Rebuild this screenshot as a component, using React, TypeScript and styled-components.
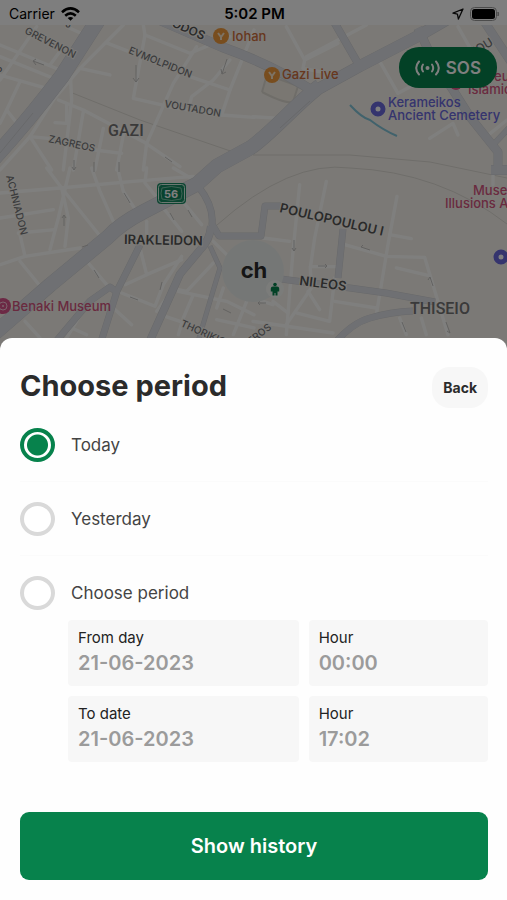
import React, { useState } from "react";
import styled, { createGlobalStyle } from "styled-components";

const GlobalStyle = createGlobalStyle`
  *, *::before, *::after { box-sizing: border-box; }
  html, body { margin: 0; background: #fefefe; }
  body, button, input {
    font-family: Inter, "Open Sans", "Liberation Sans", sans-serif;
  }
`;

const green = "#07824c";

const Screen = styled.main`
  display: flex;
  flex-direction: column;
  min-height: 100vh;
  background: #7b7974;
`;

const Stage = styled.section`
  position: relative;
  flex: 1 0 auto;
  min-height: 240px;
  margin-bottom: -12px;
  overflow: hidden;
`;

const MapCanvas = styled.svg`
  position: absolute;
  inset: 0;
  width: 100%;
  height: 100%;
`;

const Scrim = styled.div`
  position: absolute;
  inset: 0;
  background: rgba(0, 0, 0, 0.5);
`;

const StatusBar = styled.header`
  position: relative;
  display: grid;
  grid-template-columns: 1fr auto 1fr;
  align-items: center;
  height: 25px;
  padding: 3px 7px 0 9px;
  background: #fdfdfd;
  color: #000;
  font-size: 14px;
  line-height: 20px;
`;

const StatusGroup = styled.div<{ $end?: boolean }>`
  display: flex;
  align-items: center;
  justify-content: ${(p) => (p.$end ? "flex-end" : "flex-start")};
  gap: 6px;
`;

const Clock = styled.time`
  font-size: 15px;
  font-weight: 600;
`;

const MapActions = styled.div`
  position: relative;
  display: flex;
  justify-content: flex-end;
  padding: 22px 10px 0;
`;

const SosButton = styled.button`
  display: flex;
  align-items: center;
  justify-content: center;
  gap: 6px;
  height: 41px;
  padding: 0 16px;
  border: 0;
  border-radius: 20px;
  background: ${green};
  color: #fff;
  font-size: 17px;
  font-weight: 600;
  cursor: pointer;
`;

const Sheet = styled.form`
  position: relative;
  padding: 29px 19px 20px 20px;
  border-radius: 12px 12px 0 0;
  background: #fefefe;
`;

const SheetHeader = styled.div`
  display: flex;
  align-items: flex-start;
  justify-content: space-between;
`;

const Title = styled.h1`
  margin: 0;
  color: #2b2b2b;
  font-size: 29px;
  font-weight: 700;
  line-height: 38px;
`;

const BackButton = styled.button`
  height: 41px;
  padding: 0 11px;
  border: 0;
  border-radius: 18px;
  background: #f7f7f7;
  color: #2b2b2b;
  font-size: 14px;
  font-weight: 700;
  cursor: pointer;
`;

const Options = styled.fieldset`
  margin: 0;
  padding: 0;
  border: 0;
`;

const Option = styled.label<{ $last?: boolean }>`
  display: flex;
  align-items: center;
  gap: 16px;
  padding: 20px 0 ${(p) => (p.$last ? 10 : 20)}px;
  box-shadow: ${(p) => (p.$last ? "none" : "inset 0 -1px #fbfbfb")};
  color: #444;
  font-size: 17px;
  line-height: 24px;
  cursor: pointer;
`;

const Radio = styled.input`
  appearance: none;
  flex: none;
  width: 35px;
  height: 34px;
  margin: 0;
  border: 4px solid #d9d9d9;
  border-radius: 50%;
  background: #fff;
  cursor: pointer;

  &:checked {
    border-color: ${green};
    background: radial-gradient(circle, ${green} 0 10px, #fff 11px);
  }
`;

const Fields = styled.div`
  display: grid;
  grid-template-columns: 9fr 7fr;
  gap: 10px;
  margin-left: 48px;
`;

const Field = styled.label`
  display: flex;
  flex-direction: column;
  min-width: 0;
  height: 66px;
  padding: 8px 10px;
  border-radius: 4px;
  background: #f7f7f7;
  color: #222;
  font-size: 15px;
  line-height: 20px;
`;

const FieldInput = styled.input`
  width: 100%;
  height: 30px;
  padding: 0;
  border: 0;
  outline: 0;
  background: transparent;
  color: #9b9b9b;
  font-size: 20px;
  font-weight: 600;
`;

const SubmitButton = styled.button`
  display: block;
  width: 100%;
  height: 68px;
  margin-top: 50px;
  border: 0;
  border-radius: 9px;
  background: ${green};
  color: #fff;
  font-size: 20px;
  font-weight: 600;
  cursor: pointer;
`;

const RoadEdge = styled.g`
  fill: none;
  stroke: #d0d1d5;
  stroke-linejoin: round;
`;

const RoadFill = styled.g`
  fill: none;
  stroke: #dfe1e6;
  stroke-linejoin: round;
`;

const Lanes = styled.g`
  fill: none;
  stroke: #fffffd;
  stroke-width: 10;
  stroke-linecap: round;
  stroke-linejoin: round;
`;

const Arrows = styled.g`
  fill: none;
  stroke: #c6c5c3;
  stroke-width: 1;
`;

const StreetLabel = styled.text<{ $size?: number; $dark?: boolean }>`
  font-family: Inter, sans-serif;
  font-size: ${(p) => p.$size ?? 10}px;
  font-weight: ${(p) => (p.$dark ? 600 : 500)};
  fill: ${(p) => (p.$dark ? "#555" : "#77777a")};
  stroke: #f9f6f0;
  stroke-width: 2px;
  paint-order: stroke;
`;

const DistrictLabel = styled.text`
  font-family: Roboto, sans-serif;
  font-size: 16px;
  font-weight: 500;
  fill: #747474;
`;

const PlaceLabel = styled.text<{ $color: string }>`
  font-family: Inter, sans-serif;
  font-size: 13px;
  font-weight: 500;
  fill: ${(p) => p.$color};
`;

const majorRoads: [number, string][] = [
  [16, "M98 20 L62 76 C40 105 20 130 -8 160"],
  [10, "M155 18 L222 47 Q275 66 316 93"],
  [12, "M446 20 L420 35 L360 66 L320 88"],
  [15, "M320 86 C300 100 270 135 250 148 L217 166 L197 184 L143 212 Q120 224 108 237 L50 285 L-5 333"],
  [8, "M333 20 L360 67"],
  [9, "M418 28 L433 60 L453 90 L470 117 L498 152 V174"],
  [9, "M482 18 L511 62"],
  [6, "M511 126 L493 145"],
  [7, "M198 186 Q214 206 212 224 L219 236 H261 L265 206 H281"],
  [8, "M211 226 Q210 240 200 250 L180 274 L148 345"],
  [5, "M210 246 L220 268 L213 291 L197 345"],
  [7, "M140 245 L117 291 L100 345"],
  [7, "M118 293 L110 287 L90 301 L53 345"],
  [7, "M281 279 L350 288 L386 293 L435 302"],
  [7, "M343 229 L338 278"],
  [7, "M335 343 Q352 323 370 318 Q390 312 413 311"],
  [10, "M491 170 H511"],
];

const laneTiles: { at: string; d: string[] }[] = [
  {
    at: "translate(0 0) scale(0.3333)",
    d: [
      "M0 135 L60 160 L180 210", "M0 170 L160 235", "M0 225 L140 265", "M110 80 L0 240",
      "M60 245 L20 330 L55 375", "M0 370 L20 330", "M190 140 L150 195", "M200 80 L255 105",
      "M370 75 L240 205 L160 300 L90 410 L0 510", "M240 205 L330 225", "M318 128 L395 158",
      "M430 75 L435 105 L400 295 L485 315", "M435 105 L570 160 L690 110",
      "M590 140 L520 250 L440 430 L430 510", "M570 230 L690 270 L762 90",
      "M690 180 L640 240 L575 290 L570 310", "M690 270 L665 345 L762 352", "M500 320 L665 345",
      "M175 300 L250 330 L430 425 L540 500", "M210 200 L215 300 L190 510", "M250 335 L220 510",
      "M165 368 L200 370 V310", "M90 410 L155 510", "M90 410 L145 415",
      "M310 385 L285 510", "M370 405 L350 510", "M285 450 L365 460",
    ],
  },
  {
    at: "translate(253 0) scale(0.3333)",
    d: [
      "M100 80 L155 180 L255 130", "M155 180 L150 205 L200 215", "M160 170 L340 75",
      "M375 175 L435 280 L510 240", "M0 350 L80 355", "M530 415 L600 370 L615 405",
      "M615 80 L700 230", "M650 170 L700 145", "M700 410 L762 360", "M580 350 L620 330",
    ],
  },
  {
    at: "translate(0 168) scale(0.3333)",
    d: [
      "M0 75 L180 60 L400 40 L580 25", "M140 0 L185 60 L305 210", "M210 0 L175 150 L150 245",
      "M185 60 L205 150 L195 235", "M0 150 L160 125", "M55 195 L165 185", "M60 200 L75 265 L0 290",
      "M75 265 L240 240", "M60 280 L125 360", "M275 0 L300 70 L340 160", "M355 10 L370 70 L410 130",
      "M440 0 L435 45 L480 100", "M490 120 L545 190", "M540 90 L605 170", "M520 0 L580 35",
      "M440 160 V200", "M265 285 L320 350", "M420 240 L440 320 L375 350", "M440 320 L545 275",
      "M545 265 L490 350 L465 415 L365 375", "M560 290 L500 390 L470 430", "M640 285 L560 370 L535 365",
      "M535 370 L680 400 L762 440", "M580 380 L550 450 L535 500", "M480 440 L540 460",
      "M340 420 L395 470", "M75 460 L120 510", "M245 435 L200 510", "M215 480 L260 500",
      "M640 220 L680 260", "M650 455 L762 480", "M740 400 L700 500", "M670 360 L650 420",
    ],
  },
  {
    at: "translate(253 168) scale(0.3333)",
    d: [
      "M140 50 L120 250 L100 500", "M220 40 L185 210 L172 300 L175 360 L100 470",
      "M432 85 L405 230 L370 440", "M30 210 L110 220", "M275 230 L400 265 L515 268 L585 500",
      "M410 200 L475 212", "M430 300 L525 322", "M172 296 H250", "M245 330 L230 460 L130 435",
      "M165 370 L200 425", "M245 400 L370 420", "M0 460 L240 495", "M60 400 L105 435",
      "M440 450 L460 500", "M505 450 L520 500", "M0 390 L60 410", "M720 10 V50",
    ],
  },
];

const arrows = [
  "M44 65 L33 61 l3 -2 M33 61 l3 4", "M136 65 V82 l-3 -4 M136 82 l3 -4",
  "M227 59 L222 74 l-1 -5 M222 74 l4 -2", "M74 160 V170 l-2 -3 M74 170 l2 -3",
  "M94 162 V172 M119 162 V172", "M64 215 V226 M64 215 l-2 3 M64 215 l2 3",
  "M124 193 L130 203 M170 213 l4 7 M188 210 l4 7", "M94 270 l5 8 M160 290 l2 -8 M130 297 l8 3",
  "M294 240 V251 l-2 -3 M294 251 l2 -3", "M318 266 h9 l-2 -2 M327 266 l-2 2",
  "M370 250 l-9 -3 l2 -2", "M433 286 l-3 -9 l-2 3", "M402 322 l4 10 M446 322 l4 11 l-3 -2",
  "M266 303 h-8 l2 -2 M258 303 l2 2", "M223 309 l8 4", "M165 157 l7 5 M88 245 l-6 2",
];

function CityMap() {
  return (
    <MapCanvas viewBox="0 0 507 350" preserveAspectRatio="xMidYMid slice" role="img" aria-label="Map of Gazi and Thiseio">
      <rect width="507" height="350" fill="#f7f3ec" />
      <path d="M262 92 l4 -14 h10 l22 8 l-5 16 q-8 2 -31 -10" fill="#f4efe4" stroke="#dfdbd2" strokeWidth="2" />
      <path
        d="M70 92 L140 120 L245 156 M217 225 Q290 160 350 168 Q440 172 507 224 M253 155 H350 L430 162 L507 178"
        fill="none" stroke="#dedbd5" strokeWidth="1"
      />
      {laneTiles.map((tile) => (
        <Lanes key={tile.at} transform={tile.at}>
          {tile.d.map((d) => <path key={d} d={d} />)}
        </Lanes>
      ))}
      <RoadEdge>
        {majorRoads.map(([w, d]) => <path key={d} d={d} strokeWidth={w} />)}
      </RoadEdge>
      <RoadFill>
        {majorRoads.map(([w, d]) => <path key={d} d={d} strokeWidth={w - 1} />)}
      </RoadFill>
      <path d="M0 153 L33 113 M280 128 L310 101" stroke="#cfd0d4" fill="none" />
      <Arrows>{arrows.map((d) => <path key={d} d={d} />)}</Arrows>
      <path d="M350 105 Q362 118 370 120 Q383 130 397 136" fill="none" stroke="#82c4d8" strokeWidth="2" />

      <StreetLabel transform="translate(24 33) rotate(27)">GREVENON</StreetLabel>
      <StreetLabel transform="translate(128 53) rotate(22)">EVMOLPIDON</StreetLabel>
      <StreetLabel transform="translate(164 107) rotate(10)">VOUTADON</StreetLabel>
      <StreetLabel transform="translate(48 142) rotate(12)">ZAGREOS</StreetLabel>
      <StreetLabel transform="translate(6 176) rotate(76)">ACHNIADON</StreetLabel>
      <StreetLabel transform="translate(-4 75)">P</StreetLabel>
      <StreetLabel transform="translate(65 27) rotate(10)">J</StreetLabel>
      <StreetLabel $size={12} $dark transform="translate(171 26) rotate(24)">ODOS</StreetLabel>
      <StreetLabel $dark $size={13} transform="translate(124 244) rotate(1)">IRAKLEIDON</StreetLabel>
      <StreetLabel $dark $size={13} transform="translate(279 212) rotate(13)">POULOPOULOU I</StreetLabel>
      <StreetLabel $dark $size={13} transform="translate(299 285) rotate(7)">NILEOS</StreetLabel>
      <StreetLabel transform="translate(180 326) rotate(24)">THORIKION</StreetLabel>
      <StreetLabel transform="translate(251 345) rotate(-38)">EROS</StreetLabel>
      <StreetLabel $size={12} transform="translate(472 58) rotate(-32)">KOU</StreetLabel>
      <DistrictLabel x="108" y="136">GAZI</DistrictLabel>
      <DistrictLabel x="410" y="314">THISEIO</DistrictLabel>

      <g>
        <circle cx="221" cy="36" r="8" fill="#f09a3c" />
        <path d="M218 33 L221 37 L224 33 M221 37 V40" fill="none" stroke="#fbe6c8" strokeWidth="2" />
        <PlaceLabel $color="#cf6f3c" x="232" y="41">Iohan</PlaceLabel>
        <circle cx="272" cy="75" r="8" fill="#f09a3c" />
        <path d="M269 72 L272 76 L275 72 M272 76 V79" fill="none" stroke="#fbe6c8" strokeWidth="2" />
        <PlaceLabel $color="#cf6f3c" x="282" y="79">Gazi Live</PlaceLabel>
      </g>
      <g>
        <circle cx="378" cy="109" r="5" fill="#fff" stroke="#6a68dc" strokeWidth="5" />
        <PlaceLabel $color="#6a68dc" x="388" y="107">Kerameikos</PlaceLabel>
        <PlaceLabel $color="#6a68dc" x="388" y="120">Ancient Cemetery</PlaceLabel>
        <circle cx="501" cy="257" r="5" fill="#fff" stroke="#6a68dc" strokeWidth="5" />
      </g>
      <g>
        <circle cx="456" cy="84" r="6" fill="#e05a88" />
        <PlaceLabel $color="#d4557f" x="494" y="81">eum</PlaceLabel>
        <PlaceLabel $color="#d4557f" x="468" y="94">Islamic Art</PlaceLabel>
        <PlaceLabel $color="#d4557f" x="473" y="195">Museum</PlaceLabel>
        <PlaceLabel $color="#d4557f" x="445" y="208">Illusions Athens</PlaceLabel>
        <circle cx="3" cy="306" r="8" fill="#d9528a" />
        <circle cx="3" cy="306" r="4" fill="none" stroke="#f7c6da" />
        <circle cx="3" cy="306" r="1" fill="#f7c6da" />
        <PlaceLabel $color="#d4557f" x="12" y="311">Benaki Museum</PlaceLabel>
      </g>
      <g>
        <rect x="157" y="183" width="29" height="21" rx="4" fill="#188a63" />
        <rect x="158.500" y="184.500" width="26" height="18" rx="3" fill="none" stroke="#d8f0e4" />
        <path d="M162 188 q9 -3 19 0 q2 6 0 11 q-9 3 -19 0 q-2 -6 0 -11z" fill="#12855d" stroke="#7fc4a8" strokeWidth="1" />
        <text x="171" y="198" textAnchor="middle" fontFamily="Inter, sans-serif" fontSize="11" fontWeight="700" fill="#fff">56</text>
      </g>
      <g>
        <circle cx="253" cy="271" r="31" fill="#ebefed" />
        <text x="254" y="278" textAnchor="middle" fontFamily="Inter, sans-serif" fontSize="22" fontWeight="700" fill="#2a2a2a">ch</text>
        <circle cx="275" cy="289" r="9" fill="#f7f8f5" />
        <circle cx="275" cy="284.500" r="1.800" fill={green} />
        <path d="M273 286.500 h4 q2.200 0 2.200 2 v3 h-1.700 v4 h-2 v-2.500 h-1 v2.500 h-2 v-4 h-1.700 v-3 q0 -2 2.200 -2z" fill={green} />
      </g>
    </MapCanvas>
  );
}

function WifiIcon() {
  return (
    <svg width="19" height="14" viewBox="0 0 19 14" fill="none" stroke="#000" strokeWidth="2.6" aria-label="Wi-Fi">
      <path d="M1 5.2 Q9.500 -2.400 18 5.200" />
      <path d="M4.200 8.700 Q9.500 4 14.800 8.700" />
      <path d="M9.500 13.800 L6.700 11 Q9.500 8.800 12.300 11 Z" fill="#000" stroke="none" />
    </svg>
  );
}

function LocationIcon() {
  return (
    <svg width="12" height="12" viewBox="0 0 12 12" fill="none" stroke="#111" strokeWidth="1.3" strokeLinejoin="round" aria-label="Location">
      <path d="M11 1 L1 5.200 L5.400 6.200 L6.400 11 Z" />
    </svg>
  );
}

function BatteryIcon() {
  return (
    <svg width="30" height="14" viewBox="0 0 30 14" aria-label="Battery full">
      <rect x="0.5" y="0.5" width="26" height="13" rx="4" fill="none" stroke="#999" />
      <rect x="2" y="2" width="23" height="10" rx="2.5" fill="#000" />
      <path d="M28 5 q1.500 2 0 4z" fill="#999" stroke="#999" />
    </svg>
  );
}

function BroadcastIcon() {
  return (
    <svg width="25" height="16" viewBox="0 0 25 16" fill="none" stroke="#fff" strokeWidth="2" strokeLinecap="round" aria-hidden="true">
      <circle cx="12.5" cy="8" r="2" fill="#fff" stroke="none" />
      <path d="M8 4.500 Q5.600 8 8 11.500 M17 4.500 Q19.400 8 17 11.500" />
      <path d="M4 1.500 Q-1.600 8 4 14.500 M21 1.500 Q26.600 8 21 14.500" />
    </svg>
  );
}

const periods = ["Today", "Yesterday", "Choose period"];

const rangeFields = [
  { name: "fromDay", label: "From day", value: "21-06-2023" },
  { name: "fromHour", label: "Hour", value: "00:00" },
  { name: "toDate", label: "To date", value: "21-06-2023" },
  { name: "toHour", label: "Hour", value: "17:02" },
];

export default function App() {
  const [period, setPeriod] = useState("Today");

  return (
    <>
      <GlobalStyle />
      <Screen>
        <Stage>
          <CityMap />
          <StatusBar>
            <StatusGroup>
              Carrier
              <WifiIcon />
            </StatusGroup>
            <Clock>5:02 PM</Clock>
            <StatusGroup $end>
              <LocationIcon />
              <BatteryIcon />
            </StatusGroup>
          </StatusBar>
          <MapActions>
            <SosButton type="button">
              <BroadcastIcon />
              SOS
            </SosButton>
          </MapActions>
          <Scrim />
        </Stage>
        <Sheet onSubmit={(e) => e.preventDefault()}>
          <SheetHeader>
            <Title>Choose period</Title>
            <BackButton type="button">Back</BackButton>
          </SheetHeader>
          <Options aria-label="Period">
            {periods.map((name, i) => (
              <Option key={name} $last={i === periods.length - 1}>
                <Radio type="radio" name="period" checked={period === name} onChange={() => setPeriod(name)} />
                {name}
              </Option>
            ))}
          </Options>
          <Fields>
            {rangeFields.map((field) => (
              <Field key={field.name}>
                {field.label}
                <FieldInput name={field.name} defaultValue={field.value} />
              </Field>
            ))}
          </Fields>
          <SubmitButton type="submit">Show history</SubmitButton>
        </Sheet>
      </Screen>
    </>
  );
}
